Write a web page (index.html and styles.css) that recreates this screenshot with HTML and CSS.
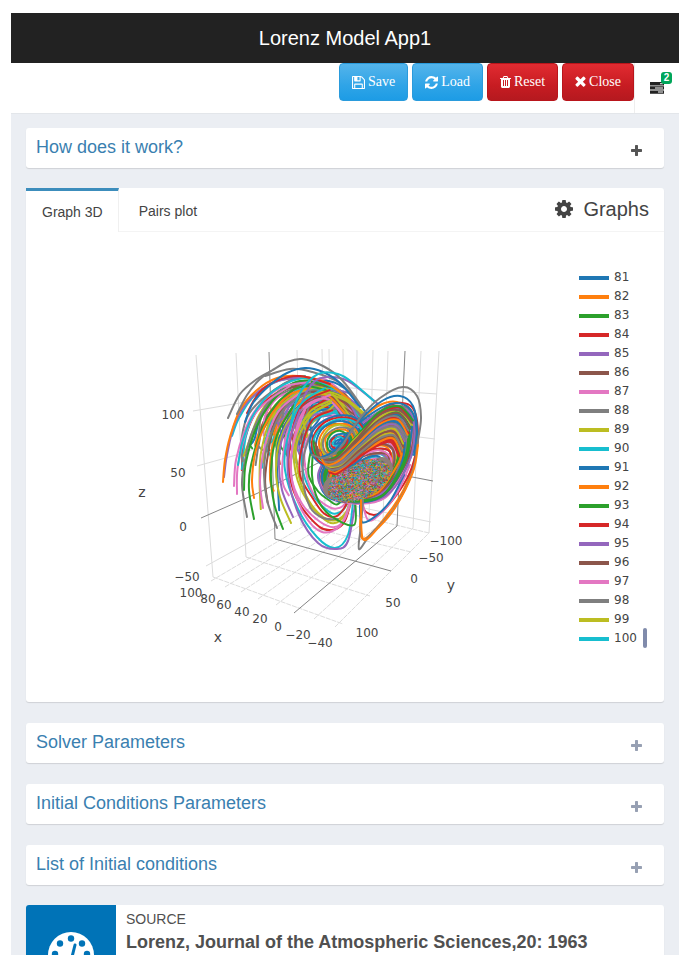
FILE: index.html
```html
<!DOCTYPE html>
<html lang="en">
<head>
<meta charset="utf-8">
<title>Lorenz Model App1</title>
<link rel="stylesheet" href="styles.css">
</head>
<body>
<svg class="sprite" aria-hidden="true">
  <symbol id="i-save" viewBox="128 128 1536 1536"><path d="M512 1536h768v-384h-768v384zm896 0h128v-896q0-14-10-38.500t-20-34.500l-281-281q-10-10-34-20t-39-10v416q0 40-28 68t-68 28h-576q-40 0-68-28t-28-68v-416h-128v1280h128v-416q0-40 28-68t68-28h832q40 0 68 28t28 68v416zm-384-928v-320q0-13-9.500-22.500t-22.500-9.500h-192q-13 0-22.500 9.500t-9.500 22.500v320q0 13 9.500 22.500t22.500 9.500h192q13 0 22.500-9.500t9.500-22.500zm640 32v928q0 40-28 68t-68 28h-1344q-40 0-68-28t-28-68v-1344q0-40 28-68t68-28h928q40 0 88 20t76 48l280 280q28 28 48 76t20 88z"/></symbol>
  <symbol id="i-load" viewBox="128 128 1536 1536"><path d="M1639 1056q0 5-1 7-64 268-268 434.500t-478 166.500q-146 0-282.500-55t-243.500-157l-129 129q-19 19-45 19t-45-19-19-45v-448q0-26 19-45t45-19h448q26 0 45 19t19 45-19 45l-137 137q71 66 161 102t187 36q134 0 250-65t186-179q11-17 53-117 8-23 30-23h192q13 0 22.500 9.500t9.500 22.500zm25-800v448q0 26-19 45t-45 19h-448q-26 0-45-19t-19-45 19-45l138-138q-148-137-349-137-134 0-250 65t-186 179q-11 17-53 117-8 23-30 23h-199q-13 0-22.500-9.500t-9.500-22.500v-7q65-268 270-434.500t480-166.500q146 0 284 55.500t245 156.500l130-129q19-19 45-19t45 19 19 45z"/></symbol>
  <symbol id="i-trash" viewBox="192 128 1408 1536"><path d="M704 1376v-704q0-14-9-23t-23-9h-64q-14 0-23 9t-9 23v704q0 14 9 23t23 9h64q14 0 23-9t9-23zm256 0v-704q0-14-9-23t-23-9h-64q-14 0-23 9t-9 23v704q0 14 9 23t23 9h64q14 0 23-9t9-23zm256 0v-704q0-14-9-23t-23-9h-64q-14 0-23 9t-9 23v704q0 14 9 23t23 9h64q14 0 23-9t9-23zm-544-992h448l-48-117q-7-9-17-11h-317q-10 2-17 11zm928 32v64q0 14-9 23t-23 9h-96v948q0 83-47 143.500t-113 60.500h-832q-66 0-113-58.500t-47-141.500v-952h-96q-14 0-23-9t-9-23v-64q0-14 9-23t23-9h309l70-167q15-37 54-63t79-26h320q40 0 79 26t54 63l70 167h309q14 0 23 9t9 23z"/></symbol>
  <symbol id="i-times" viewBox="302 302 1188 1396"><path d="M1490 1322q0 40-28 68l-136 136q-28 28-68 28t-68-28l-294-294-294 294q-28 28-68 28t-68-28l-136-136q-28-28-28-68t28-68l294-294-294-294q-28-28-28-68t28-68l136-136q28-28 68-28t68 28l294 294 294-294q28-28 68-28t68 28l136 136q28 28 28 68t-28 68l-294 294 294 294q28 28 28 68z"/></symbol>
  <symbol id="i-plus" viewBox="192 128 1408 1408"><path d="M1600 736v192q0 40-28 68t-68 28h-416v416q0 40-28 68t-68 28h-192q-40 0-68-28t-28-68v-416h-416q-40 0-68-28t-28-68v-192q0-40 28-68t68-28h416v-416q0-40 28-68t68-28h192q40 0 68 28t28 68v416h416q40 0 68 28t28 68z"/></symbol>
  <symbol id="i-cog" viewBox="128 128 1536 1536"><path d="M1152 896q0-106-75-181t-181-75-181 75-75 181 75 181 181 75 181-75 75-181zm512-109v222q0 12-8 23t-20 13l-185 28q-19 54-39 91 35 50 107 138 10 12 10 25t-9 23q-27 37-99 108t-94 71q-12 0-26-9l-138-108q-44 23-91 38-16 136-29 186-7 28-36 28h-222q-14 0-24.500-8.500t-11.500-21.500l-28-184q-49-16-90-37l-141 107q-10 9-25 9-14 0-25-11-126-114-165-168-7-10-7-23 0-12 8-23 15-21 51-66.500t54-70.500q-27-50-41-99l-183-27q-13-2-21-12.500t-8-23.500v-222q0-12 8-23t19-13l186-28q14-46 39-92-40-57-107-138-10-12-10-24 0-10 9-23 26-36 98.500-107.500t94.500-71.500q13 0 26 10l138 107q44-23 91-38 16-136 29-186 7-28 36-28h222q14 0 24.500 8.500t11.500 21.500l28 184q49 16 90 37l142-107q9-9 24-9 13 0 25 10 129 119 165 170 7 8 7 22 0 12-8 23-15 21-51 66.500t-54 70.500q26 50 41 98l183 28q13 2 21 12.500t8 23.500z"/></symbol>
  <symbol id="i-tasks" viewBox="0 0 14 12"><path fill-rule="evenodd" d="M0 0h14v3.400H0zM10 1.200h3v1h-3zM0 4.200h14v3.400H0zM5 5.400h8v1H5zM0 8.400h14v3.400H0zM8 9.600h5v1H8z"/></symbol>
</svg>

<div class="app">
  <header class="titlebar"><h1>Lorenz Model App1</h1></header>
  <nav class="toolbar">
    <div class="actions">
      <button type="button" class="btn btn-blue"><svg class="icon"><use href="#i-save"/></svg>Save</button>
      <button type="button" class="btn btn-blue"><svg class="icon"><use href="#i-load"/></svg>Load</button>
      <button type="button" class="btn btn-red"><svg class="icon icon-narrow"><use href="#i-trash"/></svg>Reset</button>
      <button type="button" class="btn btn-red"><svg class="icon icon-narrow"><use href="#i-times"/></svg>Close</button>
    </div>
    <button type="button" class="tasks" aria-label="Tasks"><svg class="tasks-icon"><use href="#i-tasks"/></svg><span class="badge">2</span></button>
  </nav>

  <main class="content">
    <section class="box">
      <h2><a href="#how">How does it work?</a></h2>
      <button type="button" class="toggle toggle-dark" aria-label="Expand How does it work?"><svg><use href="#i-plus"/></svg></button>
    </section>

    <section class="card">
      <div class="tabs">
        <button type="button" class="tab active">Graph 3D</button>
        <button type="button" class="tab">Pairs plot</button>
        <h2 class="tabs-title"><svg><use href="#i-cog"/></svg>Graphs</h2>
      </div>
      <div class="plot">
        <svg class="scene" viewBox="26 232 553 470" role="img" aria-label="Lorenz trajectories in 3D">
          <g class="grid">
            <path d="M196 355L213 577M236 353L246 557M297 350L301 525M322 349L325 508M329 349L331 510M343 349L344 513M357 350L356 516M373 350L369 519M388 351L383 522M421 351L413 528M439 351L429 533"/>
            <path d="M193 411L240 403L323 386L437 394M197 466L240 454L323 425L435 439M206 566L246 544L325 500L431 522"/>
            <path stroke-dasharray="5 1" d="M213 577L343 624M246 557L370 596M301 525L411 552M325 508L429 533M211 581L331 510M225 587L344 513M241 592L356 516M258 599L369 519M276 605L383 522M314 619L413 528M335 627L429 533"/>
          </g>
          <g class="zero">
            <path d="M269 352L275 539M405 351L397 526M275 539L391 571M397 526L294 613M201 518L258 493L324 460L433 481"/>
          </g>
          <g id="curves" class="curves"></g>
          <g class="ticks">
            <text x="173" y="419">100</text><text x="178" y="477">50</text><text x="183" y="531">0</text><text x="187" y="581">−50</text>
            <text x="191" y="597">100</text><text x="208" y="603">80</text><text x="224" y="609">60</text><text x="242" y="616">40</text><text x="260" y="623">20</text><text x="278" y="631">0</text><text x="298" y="639">−20</text><text x="320" y="647">−40</text>
            <text x="446" y="545">−100</text><text x="431" y="562">−50</text><text x="414" y="583">0</text><text x="393" y="607">50</text><text x="367" y="637">100</text>
          </g>
          <g class="axis-names"><text x="142" y="497">z</text><text x="218" y="642">x</text><text x="451" y="590">y</text></g>
        </svg>
        <div class="legend-wrap">
          <ul id="legend" class="legend"></ul>
          <span class="scroll-thumb"></span>
        </div>
      </div>
    </section>

    <section class="box">
      <h2><a href="#solver">Solver Parameters</a></h2>
      <button type="button" class="toggle" aria-label="Expand Solver Parameters"><svg><use href="#i-plus"/></svg></button>
    </section>
    <section class="box">
      <h2><a href="#initial">Initial Conditions Parameters</a></h2>
      <button type="button" class="toggle" aria-label="Expand Initial Conditions Parameters"><svg><use href="#i-plus"/></svg></button>
    </section>
    <section class="box">
      <h2><a href="#list">List of Initial conditions</a></h2>
      <button type="button" class="toggle" aria-label="Expand List of Initial conditions"><svg><use href="#i-plus"/></svg></button>
    </section>

    <section class="source">
      <div class="source-icon">
        <svg viewBox="0 0 46 46"><circle cx="23" cy="23" r="23" fill="#fff"/><g fill="#0073b7"><circle cx="23" cy="6.500" r="3.200"/><circle cx="12" cy="11.500" r="3.200"/><circle cx="34" cy="11.500" r="3.200"/><circle cx="7" cy="22" r="3.200"/><circle cx="39" cy="22" r="3.200"/><circle cx="23" cy="30" r="5"/></g><path d="M27 13L23 29" stroke="#0073b7" stroke-width="3" stroke-linecap="round"/></svg>
      </div>
      <div class="source-text"><span>SOURCE</span><strong>Lorenz, Journal of the Atmospheric Sciences,20: 1963</strong></div>
    </section>
  </main>
</div>
<script src="plot.js"></script>
</body>
</html>
```
FILE: styles.css
```css
* { box-sizing: border-box; }
body {
  margin: 0;
  padding: 13px 13px 15px 11px;
  background: #fff;
  color: #444;
  font-family: "Liberation Sans", Arial, sans-serif;
  font-size: 14px;
  line-height: 20px;
}
h1, h2 { margin: 0; font-weight: 400; }
a { color: #3a80b0; text-decoration: none; }
button { font: inherit; color: inherit; border: 0; background: none; padding: 0; cursor: pointer; }
svg { display: block; fill: currentColor; }
.sprite { position: absolute; width: 0; height: 0; }

.app { height: calc(100vh - 28px); overflow: hidden; display: flex; flex-direction: column; }
.titlebar { flex: none; background: #222; color: #fff; text-align: center; }
.titlebar h1 { font-size: 20px; line-height: 50px; }

.toolbar { flex: none; display: flex; justify-content: flex-end; height: 51px; border-bottom: 1px solid #e3e6ea; }
.actions { display: flex; gap: 4px; align-items: flex-start; border-right: 1px solid #eee; }
.btn {
  display: flex; align-items: center; gap: 3px;
  height: 38px; padding: 0 12px;
  border: 1px solid; border-radius: 4px;
  color: #fff; font-family: "Liberation Serif", "Times New Roman", serif; font-size: 14px;
}
.btn-blue { background: linear-gradient(#54b4eb, #2fa4e7 60%, #1d9ce5); border-color: #2a9bdc; }
.btn-red { background: linear-gradient(#e12b31, #c71c22 60%, #b5191f); border-color: #b9151b; }
.icon { width: 13px; height: 13px; }
.icon-narrow { width: 11px; height: 12px; }
.tasks { position: relative; width: 44px; height: 50px; padding: 0 15px; color: #222; }
.tasks-icon { width: 14px; height: 12px; }
.badge {
  position: absolute; top: 9px; right: 7px;
  width: 11px; border-radius: 3px; background: #00a65a; color: #fff;
  font-size: 10px; font-weight: 700; line-height: 12px; text-align: center;
}

.content { flex: 1; min-height: 0; overflow: hidden; background: #ebeef3; padding: 14px 15px 0; }
.box, .card, .source { background: #fff; border-radius: 3px; box-shadow: 0 1px 1px rgba(0, 0, 0, .12); margin-bottom: 20px; }
.box { display: flex; justify-content: space-between; align-items: flex-start; padding: 9px 20px 11px 10px; }
.card { margin-bottom: 21px; }
.box h2 { font-size: 18px; line-height: 20px; }
.toggle { padding: 8px 2px 0; color: #97a0b3; }
.toggle-dark { color: #555; }
.toggle svg { width: 11px; height: 11px; }
.box + .box { margin-top: 21px; }

.tabs { display: flex; height: 44px; }
.tab { padding: 3px 20px 0; border-bottom: 1px solid #f4f4f4; }
.tab.active { padding: 0 15px 0 16px; border-top: 3px solid #3c8dbc; border-right: 1px solid #f0f0f0; border-bottom: 0; }
.tabs-title {
  flex: 1; display: flex; justify-content: flex-end; align-items: center; gap: 10px;
  padding: 0 15px 2px 0; border-bottom: 1px solid #f4f4f4;
  font-size: 20px; line-height: 24px;
}
.tabs-title svg { width: 18px; height: 18px; }

.plot { display: flex; font-family: "DejaVu Sans", Verdana, sans-serif; font-size: 12px; }
.scene { flex: 1; min-width: 0; }
.grid, .zero, .curves { fill: none; }
.grid { stroke: #dcdcdc; stroke-width: 1; }
.zero { stroke: #858585; stroke-width: 1; }
.curves { stroke-width: 2; stroke-linecap: round; stroke-linejoin: round; }
.ticks, .axis-names { text-anchor: middle; fill: #444; }
.axis-names { font-size: 14px; }
.legend-wrap { flex: none; width: 85px; display: flex; align-items: flex-end; align-self: flex-start; padding-top: 36px; }
.legend { list-style: none; margin: 0; padding: 0; width: 64px; }
.legend li { display: flex; align-items: center; gap: 5px; height: 19px; line-height: 19px; }
.swatch { flex: none; width: 30px; height: 4px; }
.scroll-thumb { width: 4px; height: 20px; border-radius: 2px; background: #808bab; }

.source { display: flex; }
.source-icon { flex: none; width: 90px; height: 90px; display: flex; align-items: center; justify-content: center; padding-top: 10px; background: #0073b7; border-radius: 3px 0 0 3px; }
.source-icon svg { width: 46px; height: 46px; }
.source-text { padding: 4px 10px; color: #505050; }
.source-text span, .source-text strong { display: block; }
.source-text strong { font-size: 18px; line-height: 26px; }
```
FILE: plot.js
```js
const COLORS = ['#1f77b4', '#ff7f0e', '#2ca02c', '#d62728', '#9467bd', '#8c564b', '#e377c2', '#7f7f7f', '#bcbd22', '#17becf'];
const [BLUE, ORANGE, GREEN, RED, PURPLE, BROWN, PINK, GREY, OLIVE, CYAN] = COLORS;
const NS = 'http://www.w3.org/2000/svg';
const curves = document.getElementById('curves');

let seed = 7;
function rnd() {
  seed = (seed * 16807) % 2147483647;
  return seed / 2147483647;
}

// Catmull-Rom spline through the points, as cubic segments.
function spline(p, closed) {
  const n = p.length;
  const at = i => closed ? p[(i + n) % n] : p[Math.max(0, Math.min(n - 1, i))];
  let d = 'M' + p[0].map(v => v.toFixed(1));
  for (let i = 0; i < (closed ? n : n - 1); i++) {
    const a = at(i - 1), b = at(i), c = at(i + 1), e = at(i + 2);
    d += 'C' + [b[0] + (c[0] - a[0]) / 6, b[1] + (c[1] - a[1]) / 6, c[0] - (e[0] - b[0]) / 6, c[1] - (e[1] - b[1]) / 6, c[0], c[1]].map(v => v.toFixed(1));
  }
  return d;
}
function draw(d, color, width) {
  const el = document.createElementNS(NS, 'path');
  el.setAttribute('d', d);
  el.setAttribute('stroke', color);
  if (width) el.setAttribute('stroke-width', width);
  curves.appendChild(el);
}
function line(color, ...p) { draw(spline(p), color); }

// Strands spread between two guide curves, drawn in shuffled order.
function family(n, P, Q, opt = {}) {
  const { jitter = 2, start = 0, closed = false, palette = COLORS, width } = opt;
  const order = [...Array(n).keys()].sort(() => rnd() - .5);
  for (const i of order) {
    const t = (i + rnd() * .6) / n;
    const pts = P.map((a, k) => [a[0] + (Q[k][0] - a[0]) * t + (rnd() - .5) * jitter, a[1] + (Q[k][1] - a[1]) * t + (rnd() - .5) * jitter]);
    if (start) pts[0][1] += (rnd() - .5) * start;
    draw(spline(pts, closed), palette[Math.floor(rnd() * palette.length)], width);
  }
}

// Transients arriving from the left.
family(30, [[240, 455], [243, 438], [252, 410], [274, 387], [305, 378], [335, 388], [362, 418]],
  [[308, 462], [304, 448], [307, 434], [315, 420], [328, 414], [343, 420], [352, 438]], { jitter: 7, start: 30 });
family(34, [[262, 430], [268, 415], [280, 398], [298, 384], [322, 382], [345, 395], [366, 420]],
  [[312, 440], [310, 430], [316, 420], [324, 412], [334, 408], [348, 414], [360, 430]], { jitter: 12, start: 20 });
family(5, [[258, 500], [256, 480], [260, 450], [270, 415], [295, 392], [325, 388], [350, 415]],
  [[290, 500], [286, 480], [286, 450], [290, 430], [305, 408], [330, 402], [350, 425]], { jitter: 3, start: 30 });

line(GREY, [247, 517], [242, 485], [245, 460], [253, 430], [273, 397], [300, 383], [335, 388], [360, 415]);
line(GREEN, [244, 490], [246, 462], [258, 424], [276, 397], [300, 381], [335, 388]);
line(GREEN, [254, 519], [249, 490], [251, 465], [263, 427], [280, 400], [305, 386], [340, 395]);
line(ORANGE, [254, 498], [252, 480], [256, 450], [268, 420], [288, 396], [310, 388]);
line(PINK, [234, 486], [236, 460], [245, 430], [257, 408], [280, 388], [310, 382]);
line(PINK, [237, 494], [238, 465], [249, 425], [264, 404], [290, 386]);
line(CYAN, [238, 465], [243, 440], [255, 412], [275, 390], [305, 378], [335, 388]);
line(PINK, [263, 508], [260, 480], [265, 445], [278, 412], [300, 393]);
line(GREY, [277, 528], [267, 500], [264, 470], [269, 440], [285, 408], [310, 392]);
line(GREEN, [283, 529], [274, 503], [271, 470], [277, 435], [294, 405]);
line(OLIVE, [291, 523], [280, 497], [276, 470], [280, 440], [296, 410], [320, 394], [345, 400], [364, 415]);
line(PURPLE, [293, 517], [282, 490], [279, 460], [285, 430], [302, 408]);
line(CYAN, [232, 436], [239, 418], [254, 396], [278, 381], [305, 376]);
line(PURPLE, [224, 477], [227, 455], [235, 423], [251, 398], [275, 382], [300, 377]);
line(ORANGE, [223, 482], [225, 460], [230, 437], [240, 410], [257, 390], [277, 378], [299, 376], [325, 382], [350, 400]);
line(RED, [247, 413], [259, 393], [276, 381], [300, 376], [330, 384]);
line(GREY, [265, 376], [290, 369], [312, 372], [340, 383], [360, 405]);
line(PURPLE, [296, 430], [302, 402], [314, 382], [328, 377], [348, 381], [378, 404]);
line(BLUE, [245, 422], [253, 403], [270, 385], [287, 373], [305, 368], [323, 372], [340, 383], [360, 407]);
line(GREY, [228, 418], [240, 394], [257, 379], [271, 371], [287, 362], [302, 359], [323, 366], [342, 380], [363, 408]);
line(GREY, [237, 414], [247, 395], [259, 380], [271, 371]);
line(CYAN, [290, 430], [296, 402], [307, 383], [321, 373], [338, 374], [352, 382], [375, 402]);
line(OLIVE, [293, 430], [304, 402], [322, 392], [343, 397], [364, 413]);

// Long loops under the left wing.
family(8, [[330, 390], [303, 404], [289, 440], [289, 475], [300, 506], [318, 527], [333, 531], [346, 522], [353, 500]],
  [[335, 425], [320, 432], [311, 450], [311, 474], [320, 490], [330, 500], [337, 503], [344, 498], [350, 485]], { jitter: 3, palette: [PINK, CYAN, OLIVE, RED, GREEN, PINK] });
line(CYAN, [325, 388], [300, 405], [287, 440], [285, 470], [297, 507], [317, 537], [335, 548], [348, 535], [353, 503]);
line(PURPLE, [300, 410], [290, 440], [288, 475], [299, 515], [318, 543], [337, 549], [348, 541], [355, 505]);
line(PINK, [305, 410], [293, 445], [292, 480], [304, 514], [322, 532], [340, 526], [350, 503]);
line(GREY, [312, 430], [304, 455], [303, 480], [310, 507], [323, 518], [338, 519]);
line(GREEN, [314, 440], [312, 475], [318, 500], [331, 516], [354, 525], [355, 500]);

// Right wing, from the rim towards the attractor core.
line(ORANGE, [360, 420], [380, 405], [397, 402], [412, 412], [416, 440], [412, 470], [393, 507], [363, 539], [361, 503]);
line(RED, [365, 425], [390, 405], [412, 407], [418, 437], [412, 467], [400, 490], [380, 513], [366, 512], [360, 498]);
line(PINK, [410, 465], [397, 493], [380, 514], [368, 520], [362, 500]);
line(BLUE, [404, 475], [391, 500], [377, 515], [362, 522], [360, 500]);
family(50, [[318, 475], [333, 450], [364, 420], [394, 404], [412, 411], [415, 440], [405, 470], [385, 497], [355, 504], [328, 496]],
  [[345, 482], [352, 474], [362, 465], [374, 462], [382, 466], [382, 474], [376, 484], [365, 490], [354, 492], [347, 488]], { closed: true, jitter: 3 });

// Speckled core where all the trajectories settle.
draw('M334 488L350 484L368 474L382 468', '#8f7f78', 22);
for (let pass = 0; pass < 4; pass++) {
  for (const color of COLORS) {
    let d = '';
    for (let i = 0; i < 90; i++) {
      const a = rnd() * Math.PI * 2, r = Math.sqrt(rnd());
      const u = 33 * r * Math.cos(a), v = 18 * r * Math.sin(a);
      d += 'M' + (359 + u * .91 + v * .42).toFixed(1) + ' ' + (481 - u * .42 + v * .91).toFixed(1) + 'h.5';
    }
    draw(d, color, 1);
  }
}

// Left wing spiral and the bands that cross to the right wing.
for (let k = 13; k > 0; k--) {
  const pts = [];
  for (let j = 0; j < 10; j++) {
    const a = j * Math.PI / 5, rx = 2 * k + 2, ry = 2 * k;
    pts.push([338 + rx * Math.cos(a) + ry * .25 * Math.sin(a) + rnd() * 2, 441 - rx * .3 * Math.cos(a) + ry * Math.sin(a) + rnd() * 2]);
  }
  draw(spline(pts, true), [ORANGE, BLUE, CYAN, RED, BLUE, GREEN, ORANGE, GREY, OLIVE][k % 9]);
}
family(26, [[314, 440], [318, 456], [334, 458], [354, 438], [379, 413], [400, 406], [413, 420]],
  [[330, 474], [337, 474], [347, 468], [362, 456], [380, 444], [392, 443], [399, 458]], { jitter: 2, palette: [ORANGE, RED, BLUE, OLIVE, GREEN, ORANGE, GREY, BROWN, PURPLE, RED] });
line(BLUE, [320, 458], [335, 450], [360, 420], [382, 401], [400, 396], [413, 406], [417, 430], [414, 455]);
line(GREY, [312, 455], [325, 458], [340, 448], [360, 418], [380, 398], [403, 387], [417, 396], [421, 417], [418, 440], [412, 473], [393, 510], [370, 535], [359, 549], [361, 525], [363, 500]);
line(ORANGE, [418, 445], [413, 472], [395, 508], [378, 528], [363, 539], [361, 500]);

// Legend rows.
const legend = document.getElementById('legend');
for (let n = 81; n <= 100; n++) {
  const li = document.createElement('li');
  const mark = document.createElement('span');
  mark.className = 'swatch';
  mark.style.background = COLORS[(n - 1) % 10];
  li.append(mark, String(n));
  legend.append(li);
}
```
